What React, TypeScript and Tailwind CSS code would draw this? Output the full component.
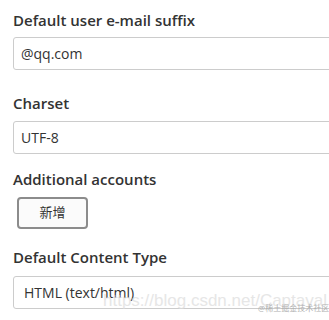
import React from 'react';

const font = { fontFamily: '"Open Sans", "Noto Sans CJK SC", sans-serif' };

function Label({ text, className }: { text: string; className: string }) {
  return <div className={`text-[15px] leading-5 font-semibold text-[#333] ${className}`}>{text}</div>;
}

export default function App() {
  return (
    <div className="relative w-[329px] h-[320px] overflow-hidden bg-white pl-[13px] pt-[10px]" style={font}>
      <Label text="Default user e-mail suffix" className="mb-[7px]" />
      <div className="w-[340px] h-[33px] border border-[#ccc] rounded-[3px] flex items-center px-[7px] text-[14px] text-[#333]">
        @qq.com
      </div>

      <Label text="Charset" className="mt-[23px] mb-[8px]" />
      <div className="w-[340px] h-[33px] border border-[#ccc] rounded-[3px] flex items-center px-[7px] text-[14px] text-[#333]">
        UTF-8
      </div>

      <Label text="Additional accounts" className="mt-[15px] mb-[8px]" />
      <div className="ml-[4px] w-[71px] h-[32px] border-2 border-[#8c8c8c] rounded-[4px] bg-[#fbfbfb] flex items-center justify-center text-[13px] text-[#333]">
        新增
      </div>

      <Label text="Default Content Type" className="mt-[18px] mb-[9px]" />
      <div className="w-[340px] h-[33px] border border-[#ccc] rounded-[3px] flex items-center px-[10px] text-[14px] text-[#333]">
        HTML (text/html)
      </div>

      <div className="absolute left-[103px] top-[288px] text-[17px] text-[#dcdcdc] opacity-70 whitespace-nowrap" style={{ fontFamily: '"Liberation Sans", sans-serif' }}>
        https://blog.csdn.net/Captaval
      </div>
      <div className="absolute left-[258px] top-[302px] text-[8px] text-[#b0b0b0] whitespace-nowrap">
        @稀土掘金技术社区
      </div>
    </div>
  );
}
